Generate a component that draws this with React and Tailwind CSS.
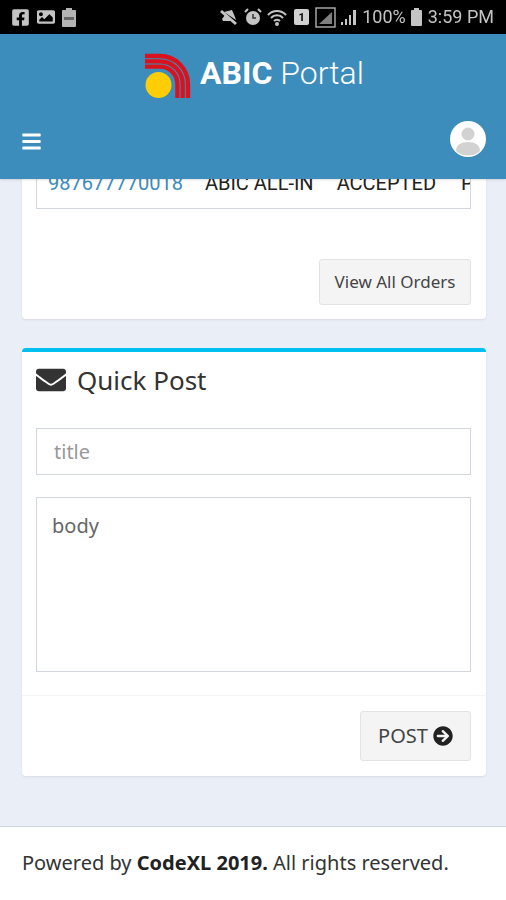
import { FaArrowCircleRight, FaBars, FaEnvelope, FaFacebookSquare, FaImage } from 'react-icons/fa';

function Logo() {
  return (
    <svg width="46" height="46" viewBox="0 0 46 46" className="shrink-0">
      <g fill="none" stroke="#d8131e" strokeWidth="4.3">
        <path d="M0 3H15A28 28 0 0 1 43 31V45" />
        <path d="M0 8.3H15A22.7 22.7 0 0 1 37.7 31V45" />
        <path d="M0 13.6H15A17.4 17.4 0 0 1 32.4 31V45" />
      </g>
      <circle cx="13.5" cy="32" r="13" fill="#ffcd05" />
    </svg>
  );
}

function Avatar() {
  return (
    <svg width="36" height="36" viewBox="0 0 36 36">
      <circle cx="18" cy="18" r="18" fill="#fff" />
      <circle cx="18" cy="13" r="6.5" fill="#d2d2d2" />
      <path d="M6 30c0-6 5-9 12-9s12 3 12 9a18 18 0 0 1-24 0z" fill="#d2d2d2" />
    </svg>
  );
}

function StatusBar() {
  return (
    <div className="flex h-[34px] items-center justify-between bg-black pl-[11px] pr-[12px] text-[#c4c4c4] font-['Roboto',sans-serif] blur-[0.6px]">
      <div className="flex items-center gap-[7px]">
        <FaFacebookSquare size={19} />
        <FaImage size={18} />
        <svg width="14" height="19" viewBox="0 0 14 19">
          <path d="M4 0h6v2h3a1 1 0 0 1 1 1v15a1 1 0 0 1-1 1H1a1 1 0 0 1-1-1V3a1 1 0 0 1 1-1h3z" fill="#b4b4b4" />
          <rect x="2" y="9" width="10" height="3" fill="#666" />
        </svg>
      </div>
      <div className="flex items-center gap-[5px]">
        <svg width="20" height="18" viewBox="0 0 20 18" fill="#c4c4c4">
          <path d="M3 2l15 13-2 2L1 4z" />
          <path d="M5 4l8-2 3 7 1 3zM3 11l3-4 7 6H4z" />
        </svg>
        <svg width="18" height="18" viewBox="0 0 18 18">
          <circle cx="9" cy="10" r="7" fill="#c4c4c4" />
          <path d="M9 6v4h3" stroke="#333" strokeWidth="1.5" fill="none" />
          <path d="M1 4l3-3M17 4l-3-3" stroke="#c4c4c4" strokeWidth="2" />
        </svg>
        <svg width="22" height="18" viewBox="0 0 22 18" fill="none" stroke="#c4c4c4" strokeWidth="2">
          <path d="M1 7a12 12 0 0 1 18 0M4 10a8 8 0 0 1 12 0M7 13a4 4 0 0 1 6 0" />
          <circle cx="10" cy="16" r="1" fill="#c4c4c4" />
        </svg>
        <div className="flex h-[16px] w-[15px] items-center justify-center rounded-[2px] bg-[#d0d0d0] text-[11px] font-bold leading-none text-black">1</div>
        <svg width="21" height="21" viewBox="0 0 21 21" fill="none" className="ml-[1px]">
          <rect x="1" y="1" width="19" height="19" stroke="#b0b0b0" strokeWidth="1.4" />
          <path d="M4 17L17 5v12z" fill="#808080" />
        </svg>
        <svg width="16" height="16" viewBox="0 0 16 16" fill="#c4c4c4">
          <rect x="0" y="13" width="2" height="3" />
          <rect x="4" y="10" width="2" height="6" />
          <rect x="8" y="6" width="2" height="10" />
          <rect x="12" y="1" width="3" height="15" />
        </svg>
        <span className="text-[18px] leading-none">100%</span>
        <svg width="11" height="18" viewBox="0 0 11 18" fill="#c4c4c4">
          <path d="M3 0h5v2h2a1 1 0 0 1 1 1v14a1 1 0 0 1-1 1H1a1 1 0 0 1-1-1V3a1 1 0 0 1 1-1h2z" />
        </svg>
        <span className="ml-[1px] text-[18px] leading-none">3:59 PM</span>
      </div>
    </div>
  );
}

function Header() {
  return (
    <header className="relative z-10 h-[145px] bg-[#3c8dbc] shadow-sm">
      <div className="flex h-[70px] items-end justify-center gap-[9px] pb-[5px] pl-[3px]">
        <Logo />
        <div className="mb-[7px] whitespace-nowrap font-['Roboto',sans-serif] text-[32px] leading-[38px] text-white">
          <span className="font-bold">ABIC</span> <span className="font-light">Portal</span>
        </div>
      </div>
      <div className="flex items-start justify-between pl-[21px] pr-[20px] pt-[17px]">
        <FaBars className="mt-[10px] text-white" size={21} />
        <Avatar />
      </div>
    </header>
  );
}

export default function App() {
  return (
    <div className="flex h-[900px] flex-col overflow-hidden bg-[#eaeef6] font-['Noto_Sans',sans-serif]">
      <StatusBar />
      <Header />

      <main className="-mt-[19px] flex flex-col gap-[29px] pl-[22px] pr-[20px]">
        <section className="rounded-b-[4px] bg-white pl-[14px] pr-[15px] pb-[14px] shadow-[0_1px_2px_rgba(0,0,0,0.08)]">
          <div className="flex h-[49px] items-end overflow-hidden border border-t-0 border-[#d2d6de] pb-[14px] pl-[11px] font-['Roboto',sans-serif] text-[20px] leading-[22px] whitespace-nowrap text-[#222]">
            <span className="text-[#3c8dbc]">987677770018</span>
            <span className="ml-[22px]">ABIC ALL-IN</span>
            <span className="ml-[23px]">ACCEPTED</span>
            <span className="ml-[25px]">PENDING</span>
          </div>
          <div className="mt-[50px] flex justify-end">
            <button className="h-[46px] w-[152px] rounded-[3px] border border-[#e3e3e3] bg-[#f4f4f4] text-[17px] text-[#444]">
              View All Orders
            </button>
          </div>
        </section>

        <section className="rounded-[4px] border-t-4 border-[#00c0ef] bg-white shadow-[0_1px_2px_rgba(0,0,0,0.08)]">
          <div className="flex items-center gap-[11px] pl-[14px] pr-[15px] pt-[10px] text-[#333]">
            <FaEnvelope size={30} />
            <h3 className="text-[26px] leading-[36px]">Quick Post</h3>
          </div>
          <div className="flex flex-col gap-[22px] pl-[14px] pr-[15px] pt-[30px] pb-[23px]">
            <div className="flex h-[47px] items-center border border-[#d2d6de] px-[17px] text-[20px] text-[#999]">title</div>
            <div className="h-[175px] border border-[#d2d6de] px-[15px] py-[13px] text-[20px] leading-[30px] text-[#666]">body</div>
          </div>
          <div className="flex justify-end border-t border-[#f4f4f4] pl-[14px] pr-[15px] py-[15px]">
            <button className="flex h-[50px] w-[111px] items-center justify-center gap-[5px] rounded-[3px] border border-[#e3e3e3] bg-[#f4f4f4] text-[20px] text-[#444]">
              POST <FaArrowCircleRight className="text-[#222]" size={20} />
            </button>
          </div>
        </section>
      </main>

      <footer className="mt-[50px] flex-1 border-t border-[#d2d6de] bg-white px-[22px] pt-[21px] text-[20px] leading-[30px] whitespace-nowrap text-[#333]">
        Powered by <b className="text-[#222]">CodeXL 2019.</b> All rights reserved.
      </footer>
    </div>
  );
}
